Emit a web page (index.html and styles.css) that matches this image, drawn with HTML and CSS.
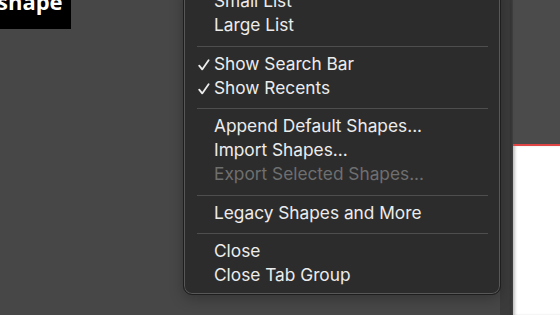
FILE: index.html
```html
<!DOCTYPE html>
<html>
<head>
<meta charset="utf-8">
<link rel="stylesheet" href="styles.css">
</head>
<body>
<div class="app">
  <div class="workspace">
    <div class="label"><div class="label-text">shape</div></div>
  </div>
  <div class="divider"></div>
  <div class="canvas">
    <div class="canvas-top"></div>
    <div class="page"></div>
  </div>
</div>
<div class="menu">
  <div class="item">Small List</div>
  <div class="item">Large List</div>
  <div class="sep"></div>
  <div class="item checked"><svg class="check" width="12" height="12" viewBox="0 0 12 12"><path d="M1.2 6.6 L4.2 10.4 L10.6 1.2" fill="none" stroke="#ececec" stroke-width="1.8" stroke-linecap="round" stroke-linejoin="round"/></svg>Show Search Bar</div>
  <div class="item checked"><svg class="check" width="12" height="12" viewBox="0 0 12 12"><path d="M1.2 6.6 L4.2 10.4 L10.6 1.2" fill="none" stroke="#ececec" stroke-width="1.8" stroke-linecap="round" stroke-linejoin="round"/></svg>Show Recents</div>
  <div class="sep"></div>
  <div class="item">Append Default Shapes...</div>
  <div class="item">Import Shapes...</div>
  <div class="item disabled">Export Selected Shapes...</div>
  <div class="sep"></div>
  <div class="item">Legacy Shapes and More</div>
  <div class="sep"></div>
  <div class="item">Close</div>
  <div class="item">Close Tab Group</div>
</div>
</body>
</html>
```

FILE: styles.css
```css
html, body {
  margin: 0;
  padding: 0;
  width: 560px;
  height: 315px;
  overflow: hidden;
  background: #474747;
}
.app {
  display: flex;
  width: 560px;
  height: 315px;
}
.workspace {
  width: 500px;
  height: 315px;
  background: #474747;
}
.label {
  width: 71px;
  height: 29px;
  background: #000;
  overflow: hidden;
}
.label-text {
  margin-top: -11px;
  margin-left: -3px;
  color: #fff;
  font-family: "Open Sans", "Liberation Sans", sans-serif;
  font-weight: 700;
  font-size: 22px;
  line-height: 24px;
}
.divider {
  width: 13px;
  height: 315px;
  background: linear-gradient(to right, #3b3b3b 0, #3b3b3b 9px, #353535 11px, #424242 13px);
}
.canvas {
  flex: 1;
  display: flex;
  flex-direction: column;
}
.canvas-top {
  height: 144px;
  background: #4b4b4b;
  border-bottom: 2px solid #e04545;
}
.page {
  flex: 1;
  background: #fff;
  box-shadow: inset 3px 0 3px -1px rgba(0,0,0,0.25);
}
.menu {
  position: absolute;
  left: 183px;
  top: -16px;
  width: 316px;
  padding: 5px 0 6px;
  background: #2c2c2c;
  border: 1px solid #1e1e1e;
  border-radius: 9px;
  box-shadow: inset 0 0 0 1px #585858, 0 4px 14px rgba(0,0,0,0.25);
  font-family: "Inter", "Noto Sans", sans-serif;
  font-size: 17.3px;
  color: #ececec;
}
.item {
  position: relative;
  height: 24px;
  line-height: 22px;
  padding-left: 30px;
  white-space: nowrap;
}
.item.disabled {
  color: #6f6f6f;
}
.check {
  position: absolute;
  left: 14px;
  top: 6px;
}
.sep {
  height: 1px;
  margin: 7.5px 12px 6px 13px;
  background: #4e4e4e;
}
```
